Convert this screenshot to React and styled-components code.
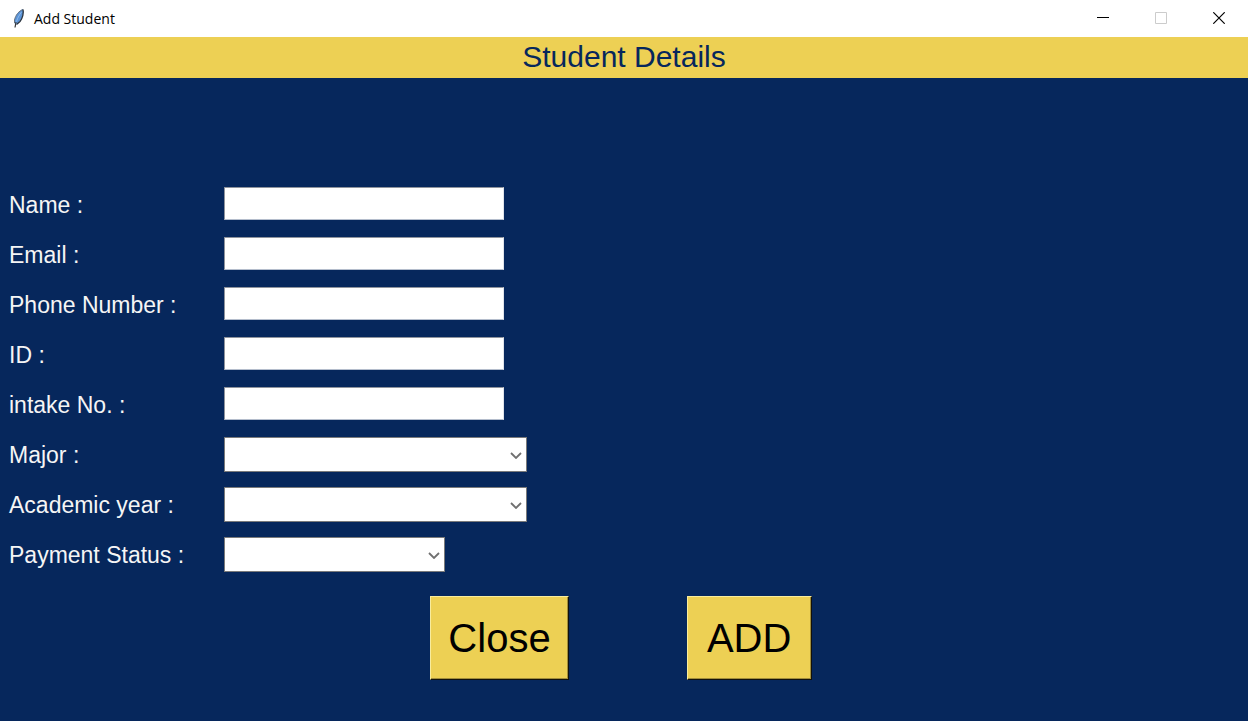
import React from "react";
import styled, { createGlobalStyle } from "styled-components";

const navy = "#06275c";
const gold = "#edd054";

const GlobalStyle = createGlobalStyle`
  *, *::before, *::after { box-sizing: border-box; }
  body {
    margin: 0;
    background: ${navy};
    font-family: "Liberation Sans", Arial, sans-serif;
  }
`;

const Window = styled.div`
  display: flex;
  flex-direction: column;
  min-height: 100vh;
  background: ${navy};
`;

const TitleBar = styled.header`
  display: flex;
  align-items: center;
  height: 37px;
  padding-left: 11px;
  background: #fff;
`;

const WindowTitle = styled.span`
  flex: 1;
  padding-left: 7px;
  font-family: "Open Sans", "Noto Sans", sans-serif;
  font-size: 14px;
  line-height: 20px;
  color: #000;
`;

const WindowControls = styled.div`
  display: flex;
  align-self: stretch;
`;

const WindowButton = styled.button`
  display: flex;
  align-items: center;
  justify-content: center;
  width: 58px;
  padding: 0 0 2px;
  border: 0;
  background: transparent;
  color: ${(p) => (p.disabled ? "#ccc" : "#000")};
`;

const Heading = styled.h1`
  margin: 0;
  height: 41px;
  background: ${gold};
  color: ${navy};
  font-size: 30px;
  font-weight: 400;
  line-height: 40px;
  text-align: center;
`;

const Form = styled.form`
  display: flex;
  flex-direction: column;
  gap: 24px;
  padding-top: 109px;
`;

const Fields = styled.div`
  display: flex;
  flex-direction: column;
  gap: 15px;
  padding: 0 9px;
`;

const Field = styled.div`
  display: grid;
  grid-template-columns: 215px 1fr;
  align-items: start;
  height: 35px;
`;

const Label = styled.label`
  color: #f5f5f5;
  font-size: 23px;
  line-height: 36px;
  white-space: nowrap;
`;

const TextInput = styled.input`
  width: 280px;
  height: 33px;
  padding: 2px 4px;
  border: 1px solid;
  border-color: #8e939c #dfe3ea #b4bdcc #8e939c;
  border-radius: 0;
  outline: 0;
  background: #fff;
  font: inherit;
  font-size: 23px;
`;

const SelectBox = styled.div`
  display: grid;
  align-items: center;
  width: ${(p) => p.$width}px;

  > * { grid-area: 1 / 1; }
  > svg { justify-self: end; margin-right: 5px; pointer-events: none; }
`;

const Select = styled.select`
  width: 100%;
  height: 35px;
  padding: 0 24px 0 4px;
  appearance: none;
  border: 1px solid #7a7a7a;
  border-radius: 0;
  outline: 0;
  background: #fff;
  font: inherit;
  font-size: 23px;
`;

const Actions = styled.div`
  display: flex;
  justify-content: center;
  gap: 118px;
  padding: 0 6px 40px 0;
`;

const ActionButton = styled.button`
  min-width: 125px;
  height: 84px;
  padding: 0 17px;
  border: 1px solid;
  border-color: #f8ec9c #12110b #12110b #f8ec9c;
  border-radius: 0;
  box-shadow: inset -1px -1px #a08d3a;
  background: ${gold};
  color: #000;
  font: inherit;
  font-size: 40px;
  line-height: 48px;
`;

const Feather = () => (
  <svg width="16" height="22" viewBox="0 0 16 22" aria-hidden="true">
    <path d="M12 1C8 2.500 4.500 7 3.500 12L3.500 15.500l2 .5c4-3 6-6 6.500-10z" fill="#5b93d6" />
    <path d="M12 1.500C8 3 4.500 7 3.500 12L3.500 15" fill="none" stroke="#66727f" />
    <path d="M12 1.500C13 5 11.500 10.500 9 13.500L5.500 16.500" fill="none" stroke="#2a333e" strokeWidth="1.300" />
    <path d="M10.500 4C7.500 8 5.500 12 4.500 17" fill="none" stroke="#8bb9ec" />
    <path d="M5 14L4 19.500" fill="none" stroke="#333" strokeWidth="1.200" />
  </svg>
);

const MinimizeIcon = () => (
  <svg width="12" height="13" viewBox="0 0 12 13" aria-hidden="true">
    <path d="M0 6h12" stroke="currentColor" shapeRendering="crispEdges" />
  </svg>
);

const MaximizeIcon = () => (
  <svg width="12" height="12" viewBox="0 0 12 12" aria-hidden="true">
    <path d="M.5 .5h11v11h-11z" fill="none" stroke="currentColor" />
  </svg>
);

const CloseIcon = () => (
  <svg width="12" height="12" viewBox="0 0 12 12" aria-hidden="true">
    <path d="M.3 .3l11.400 11.400M11.700 .3L.3 11.700" stroke="currentColor" strokeWidth="1.200" />
  </svg>
);

const Chevron = () => (
  <svg width="12" height="8" viewBox="0 0 12 8" aria-hidden="true">
    <path d="M1 2l5 5 5-5" fill="none" stroke="#707070" strokeWidth="1.800" />
  </svg>
);

const textFields = [
  ["name", "Name :", "text"],
  ["email", "Email :", "email"],
  ["phone", "Phone Number :", "tel"],
  ["student-id", "ID :", "text"],
  ["intake", "intake No. :", "text"],
];

const selectFields = [
  ["major", "Major :", 303],
  ["year", "Academic year :", 303],
  ["payment", "Payment Status :", 221],
];

export default function App() {
  return (
    <Window>
      <GlobalStyle />
      <TitleBar>
        <Feather />
        <WindowTitle>Add Student</WindowTitle>
        <WindowControls>
          <WindowButton type="button" aria-label="Minimize"><MinimizeIcon /></WindowButton>
          <WindowButton type="button" aria-label="Maximize" disabled><MaximizeIcon /></WindowButton>
          <WindowButton type="button" aria-label="Close window"><CloseIcon /></WindowButton>
        </WindowControls>
      </TitleBar>
      <main>
        <Heading>Student Details</Heading>
        <Form onSubmit={(e) => e.preventDefault()}>
          <Fields>
            {textFields.map(([id, label, type]) => (
              <Field key={id}>
                <Label htmlFor={id}>{label}</Label>
                <TextInput id={id} name={id} type={type} />
              </Field>
            ))}
            {selectFields.map(([id, label, width]) => (
              <Field key={id}>
                <Label htmlFor={id}>{label}</Label>
                <SelectBox $width={width}>
                  <Select id={id} name={id}>
                    <option value="" />
                  </Select>
                  <Chevron />
                </SelectBox>
              </Field>
            ))}
          </Fields>
          <Actions>
            <ActionButton type="button">Close</ActionButton>
            <ActionButton type="submit">ADD</ActionButton>
          </Actions>
        </Form>
      </main>
    </Window>
  );
}
